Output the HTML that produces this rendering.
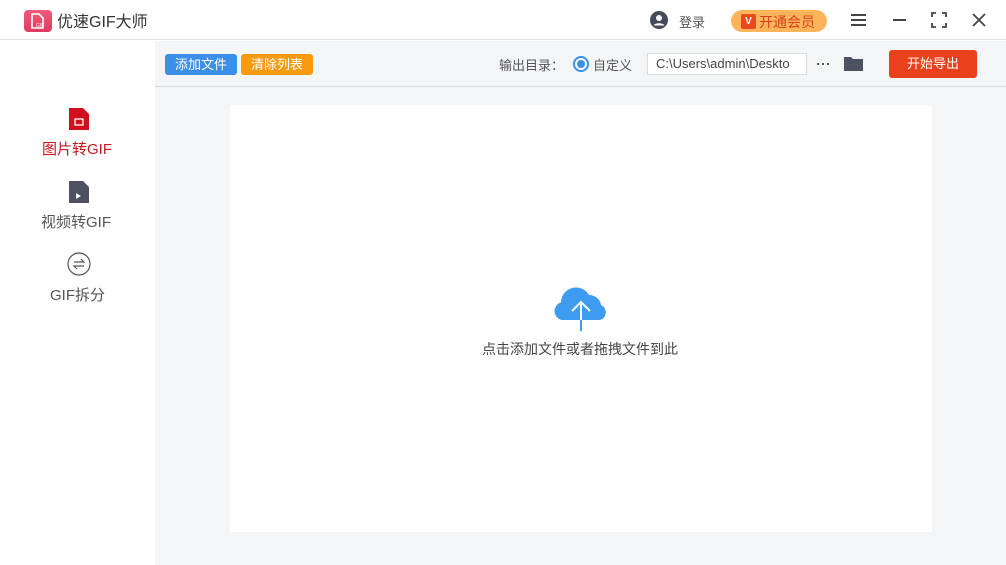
<!DOCTYPE html>
<html><head><meta charset="utf-8"><style>
*{margin:0;padding:0;box-sizing:border-box}
body{width:1006px;height:565px;overflow:hidden;background:#fff;font-family:"Liberation Sans","Noto Sans CJK SC",sans-serif;position:relative;color:#333}
.a{position:absolute}
</style></head><body>
<div class="a" style="left:0;top:0;width:1006px;height:40px;background:#fff;border-bottom:1px solid #e2e2e2"></div>
<div class="a" style="left:24px;top:10px;width:28px;height:22px;border-radius:4px;background:linear-gradient(#f05a7a,#e03a60)"></div>
<svg class="a" style="left:29px;top:12px" width="18" height="18" viewBox="0 0 18 18"><path d="M3 2h7l4 4v10H3z" fill="none" stroke="#fff" stroke-width="1.6"/><text x="7" y="15" font-size="5" fill="#fff" font-family="Liberation Sans">GIF</text></svg>
<div class="a" style="left:57px;top:8px;font-size:16px;color:#333">优速GIF大师</div>
<svg class="a" style="left:650px;top:11px" width="18" height="18" viewBox="0 0 18 18"><circle cx="9" cy="9" r="9" fill="#454a59"/><circle cx="9" cy="7" r="3" fill="#fff"/><path d="M3.5 14.5c1.5-3 9.5-3 11 0" fill="#fff"/></svg>
<div class="a" style="left:679px;top:12px;font-size:13px;color:#555">登录</div>
<div class="a" style="left:731px;top:10px;width:96px;height:22px;border-radius:11px;background:#fdb45b"></div>
<div class="a" style="left:741px;top:14px;width:15px;height:15px;border-radius:2px;background:#e84a1c;color:#fff;font-size:10px;font-weight:bold;text-align:center;line-height:15px">V</div>
<div class="a" style="left:759px;top:12px;font-size:14px;color:#d9401c">开通会员</div>
<div class="a" style="left:851px;top:14px;width:15px;height:2px;background:#444;box-shadow:0 5px 0 #444,0 10px 0 #444"></div>
<div class="a" style="left:893px;top:19px;width:13px;height:2px;background:#444"></div>
<svg class="a" style="left:931px;top:12px" width="16" height="16" viewBox="0 0 16 16" fill="none" stroke="#444" stroke-width="1.8"><path d="M1 5V1h4M11 1h4v4M15 11v4h-4M5 15H1v-4"/></svg>
<svg class="a" style="left:972px;top:13px" width="14" height="14" viewBox="0 0 14 14" stroke="#444" stroke-width="1.8"><path d="M1 1l12 12M13 1L1 13"/></svg>

<div class="a" style="left:155px;top:41px;width:851px;height:524px;background:#f4f5f7"></div>
<div class="a" style="left:155px;top:86px;width:851px;height:1px;background:#dedede"></div>
<div class="a" style="left:165px;top:54px;width:72px;height:21px;border-radius:3px;background:#3b8fe8;color:#fff;font-size:13px;text-align:center;line-height:21px">添加文件</div>
<div class="a" style="left:241px;top:54px;width:72px;height:21px;border-radius:3px;background:#f99a0f;color:#fff;font-size:13px;text-align:center;line-height:21px">清除列表</div>
<div class="a" style="left:499px;top:55px;font-size:13px;color:#555">输出目录：</div>
<div class="a" style="left:573px;top:56px;width:16px;height:16px;border-radius:50%;border:2px solid #3b8fe8;background:#fff"></div>
<div class="a" style="left:577px;top:60px;width:8px;height:8px;border-radius:50%;background:#3b8fe8"></div>
<div class="a" style="left:593px;top:55px;font-size:13px;color:#555">自定义</div>
<div class="a" style="left:647px;top:53px;width:160px;height:22px;border:1px solid #dcdcdc;background:#fff;font-size:13px;color:#444;padding-left:8px;line-height:20px;overflow:hidden;white-space:nowrap">C:\Users\admin\Deskto</div>
<div class="a" style="left:817px;top:63px;width:2px;height:2px;background:#555;box-shadow:5px 0 0 #555,10px 0 0 #555"></div>
<svg class="a" style="left:843px;top:55px" width="21" height="17" viewBox="0 0 21 17"><path d="M1 2h7l2 2h10v12H1z" fill="#4c5262"/></svg>
<div class="a" style="left:889px;top:50px;width:88px;height:28px;border-radius:3px;background:#e8411c;color:#fff;font-size:13px;text-align:center;line-height:28px">开始导出</div>

<div class="a" style="left:230px;top:105px;width:702px;height:427px;background:#fff"></div>
<svg class="a" style="left:550px;top:286px" width="62" height="48" viewBox="0 0 62 48"><path d="M12 34a9 9 0 0 1-1-17.5A15 15 0 0 1 39 9a12 12 0 0 1 12 10a8 8 0 0 1-1 15z" fill="#3d9bf0"/><path d="M31 45V16M22 25l9-9 9 9" stroke="#fff" stroke-width="2" fill="none"/><path d="M31 34v11" stroke="#3d9bf0" stroke-width="2"/></svg>
<div class="a" style="left:482px;top:339px;font-size:14px;color:#444">点击添加文件或者拖拽文件到此</div>

<svg class="a" style="left:67px;top:107px" width="24" height="24" viewBox="0 0 24 24"><path d="M2 1h14l6 6v16H2z" fill="#d0101c"/><rect x="8" y="12" width="8" height="6" fill="none" stroke="#fff" stroke-width="1.3"/></svg>
<div class="a" style="left:42px;top:138px;font-size:15px;color:#c8141e">图片转GIF</div>
<svg class="a" style="left:67px;top:180px" width="24" height="24" viewBox="0 0 24 24"><path d="M2 1h14l6 6v16H2z" fill="#4c5262"/><path d="M9 13l5 3-5 3z" fill="#fff"/></svg>
<div class="a" style="left:41px;top:211px;font-size:15px;color:#555">视频转GIF</div>
<svg class="a" style="left:66px;top:252px" width="26" height="24" viewBox="0 0 26 24" fill="none" stroke="#555" stroke-width="1.2"><circle cx="13" cy="12" r="11"/><path d="M8 10h10l-3-3M18 14H8l3 3"/></svg>
<div class="a" style="left:50px;top:284px;font-size:15px;color:#555">GIF拆分</div>
</body></html>
